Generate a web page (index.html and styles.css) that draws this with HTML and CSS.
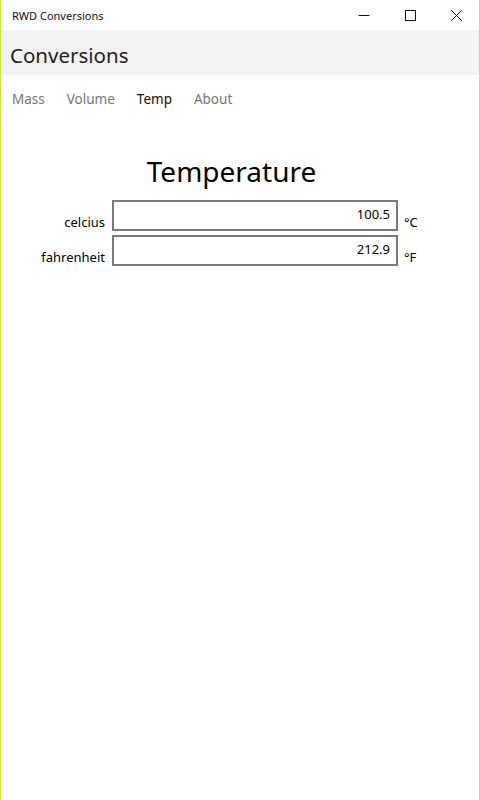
FILE: index.html
```html
<!DOCTYPE html>
<html lang="en">
<head>
    <meta charset="UTF-8">
    <title>RWD Conversions</title>
    <link rel="stylesheet" href="styles.css">
</head>
<body>
    <div class="window">
        <div class="titlebar">
            <span class="app-name">RWD Conversions</span>
            <div class="caption-buttons">
                <span class="cap-btn"><svg width="12" height="12" viewBox="0 0 12 12"><path d="M0.5 6.5h11" stroke="#111" stroke-width="1"/></svg></span>
                <span class="cap-btn"><svg width="12" height="12" viewBox="0 0 12 12"><rect x="1.5" y="1.5" width="10" height="10" fill="none" stroke="#111" stroke-width="1"/></svg></span>
                <span class="cap-btn"><svg width="12" height="12" viewBox="0 0 12 12"><path d="M1 1l11 11M12 1L1 12" stroke="#111" stroke-width="1"/></svg></span>
            </div>
        </div>
        <div class="header">Conversions</div>
        <nav class="tabs">
            <a class="tab">Mass</a>
            <a class="tab">Volume</a>
            <a class="tab active">Temp</a>
            <a class="tab">About</a>
        </nav>
        <div class="content">
            <h1 class="heading">Temperature</h1>
            <div class="form">
                <label class="lbl">celcius</label>
                <div class="field">100.5</div>
                <span class="unit">°C</span>
                <label class="lbl">fahrenheit</label>
                <div class="field">212.9</div>
                <span class="unit">°F</span>
            </div>
        </div>
    </div>
</body>
</html>
```
FILE: styles.css
```css
html, body{
    margin:0;
    padding:0;
    background:#fff;
}
.window{
    width:478px;
    height:800px;
    border-left:1px solid #c9e73f;
    border-right:1px solid #c9e73f;
    font-family:"Noto Sans", "Open Sans", sans-serif;
    color:#000;
}
.titlebar{
    height:30px;
    display:flex;
    align-items:center;
    justify-content:space-between;
}
.app-name{
    font-size:11px;
    padding-left:11px;
    color:#111;
}
.caption-buttons{
    display:flex;
}
.cap-btn{
    width:46px;
    height:30px;
    display:flex;
    align-items:center;
    justify-content:center;
}
.header{
    height:45px;
    background:#f2f2f2;
    font-size:20.5px;
    line-height:50px;
    padding-left:9px;
    color:#222;
}
.tabs{
    display:flex;
    gap:22px;
    padding:12px 0 0 11px;
    height:24px;
}
.tab{
    font-size:13.5px;
    line-height:24px;
    color:#767676;
}
.tab.active{
    color:#111;
}
.content{
    padding-top:40px;
}
.heading{
    margin:0 0 9px 0;
    text-align:center;
    font-weight:normal;
    font-size:28px;
    line-height:40px;
    width:461px;
}
.form{
    display:grid;
    grid-template-columns:104px 287px auto;
    column-gap:6px;
    row-gap:4px;
}
.lbl{
    font-size:13px;
    text-align:right;
    align-self:end;
    line-height:18px;
}
.field{
    box-sizing:border-box;
    height:31px;
    border:2px solid #7a7a7a;
    text-align:right;
    font-size:13px;
    line-height:25px;
    padding-right:6px;
    margin-left:1px;
}
.unit{
    font-size:13px;
    align-self:end;
    line-height:18px;
}
```
